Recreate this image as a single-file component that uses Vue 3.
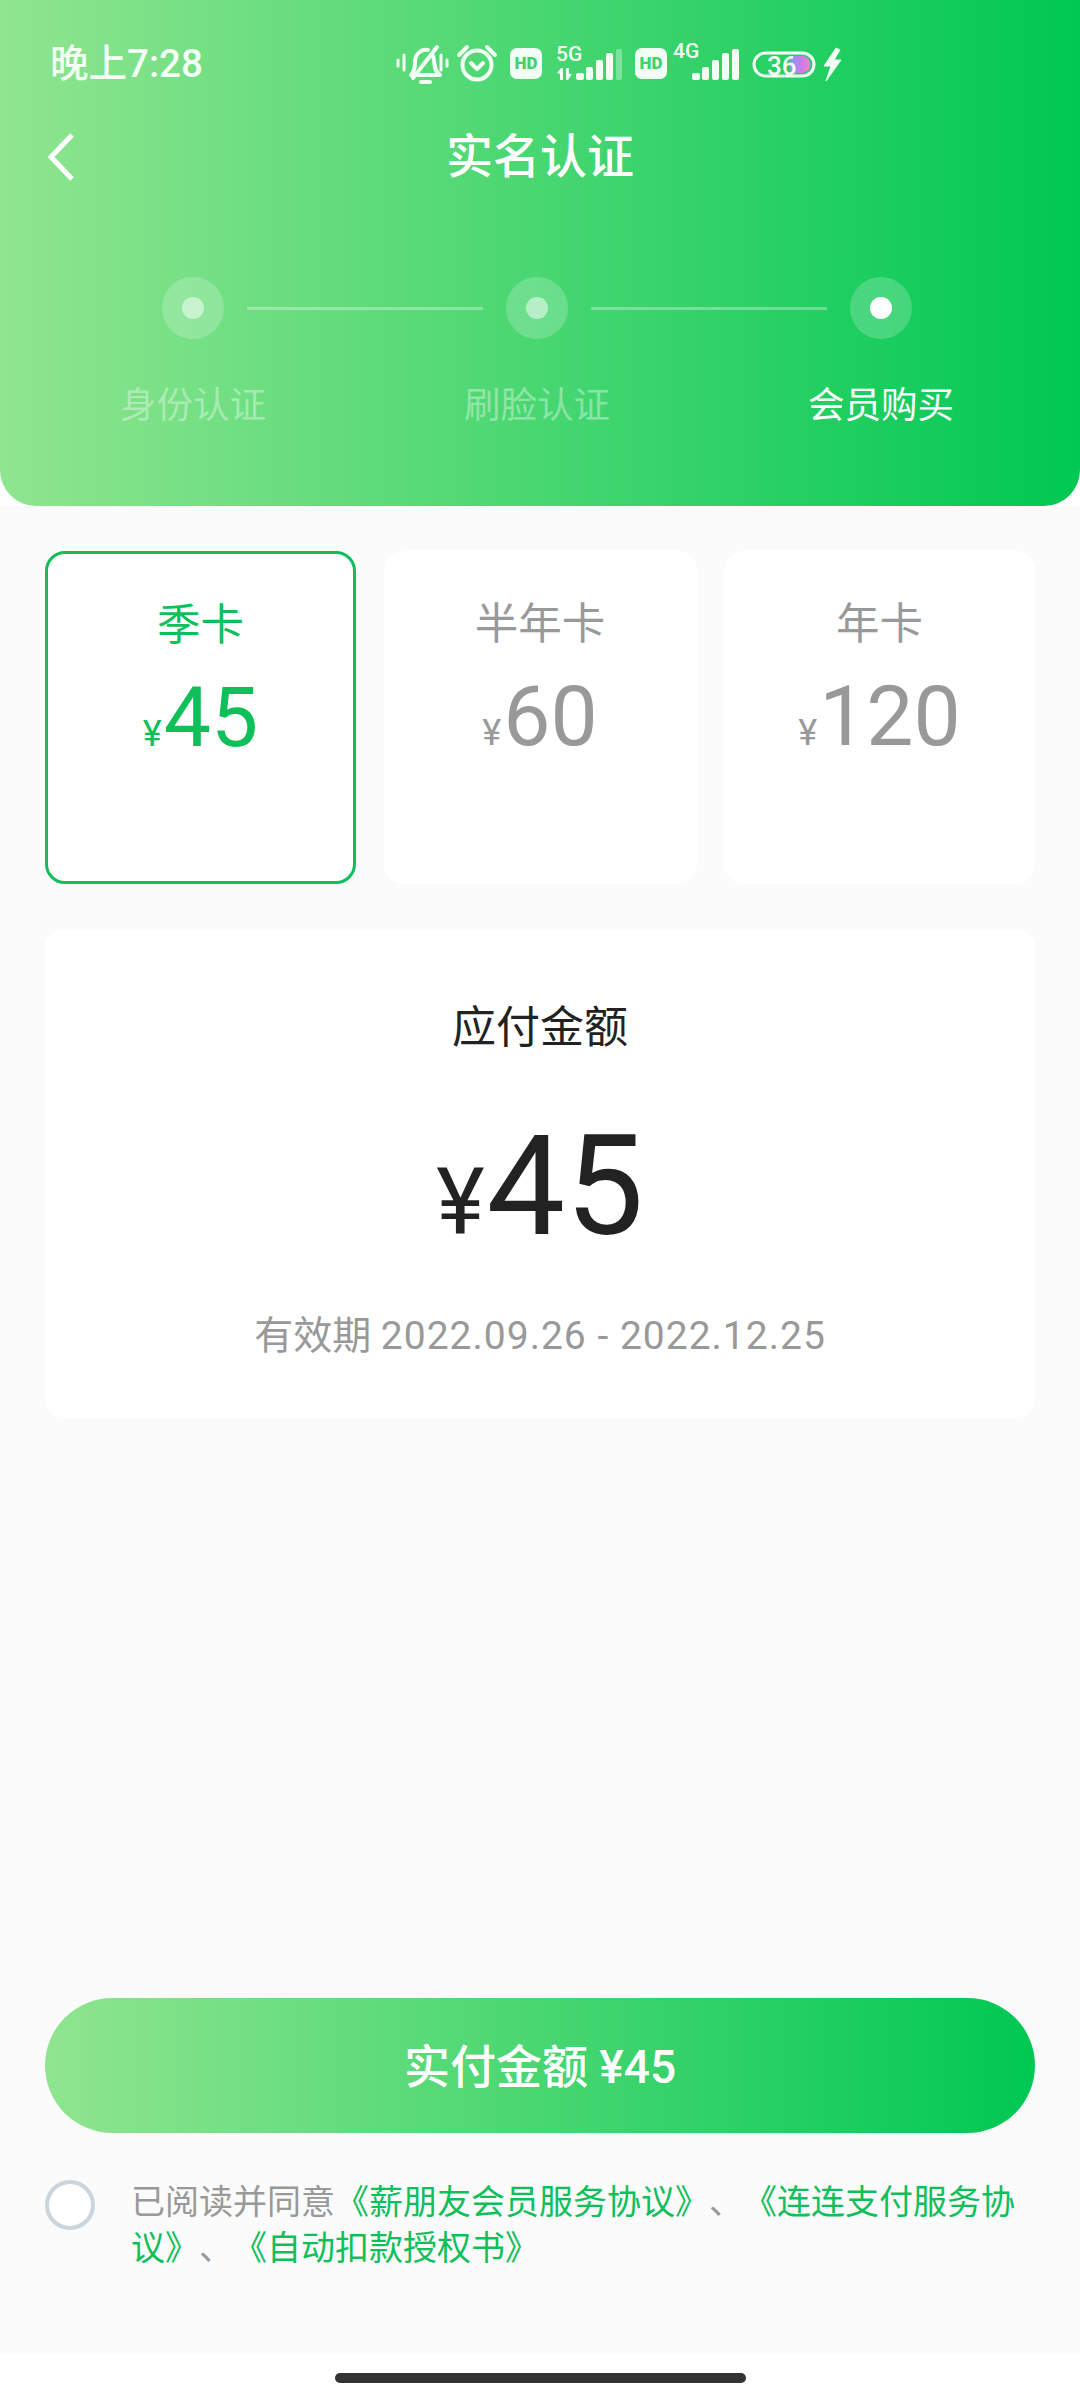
<template>
  <div class="page">
    <header class="head">
      <div class="status">
        <span class="time">晚上7:28</span>
        <svg class="status-icons" viewBox="395 40 450 46" width="450" height="46">
          <defs>
            <linearGradient id="batt" x1="0" x2="1" y1="0" y2="0">
              <stop offset="0" stop-color="#7f9cf5" />
              <stop offset="0.55" stop-color="#c77dea" />
              <stop offset="1" stop-color="#f07fd0" />
            </linearGradient>
          </defs>
          <g fill="none" stroke="#f2fff4" stroke-width="4" stroke-linecap="round" stroke-linejoin="round">
            <!-- muted bell -->
            <path d="M411 75 C415 71 415 66 415 62 C415 54 421 49 428 50 M433 56 C435 62 433 70 440 75 L418 75" />
            <path d="M413 78 L437 47" stroke-width="4" />
            <path d="M421 82 L430 82" />
            <path d="M398 60 L398 66 M404 55 L404 70 M441 55 L441 70 M447 60 L447 66" stroke-width="3" />
            <!-- alarm -->
            <circle cx="477" cy="65" r="14.5" stroke-width="4" />
            <path d="M471 63 L477 69 L483 63" />
            <path d="M459 55 L467 47 M495 55 L487 47" />
          </g>
          <rect x="510" y="48" width="32" height="31" rx="7" fill="#f2fff4" />
          <text x="526" y="69" class="hd">HD</text>
          <text x="556" y="61" class="net">5G</text>
          <g fill="#f2fff4">
            <path d="M557 73 L561 68 L563 68 L563 80 L560 80 L560 74 Z M566 68 L569 68 L569 74 L572 74 L568 80 L566 80 Z" />
            <rect x="576" y="73" width="8" height="7" rx="2" />
            <rect x="586" y="67" width="7" height="13" rx="2" />
            <rect x="596" y="60" width="7" height="20" rx="2" />
            <rect x="606" y="53" width="7" height="27" rx="2" />
            <rect x="616" y="49" width="6" height="31" rx="2" opacity=".35" />
          </g>
          <rect x="635" y="48" width="32" height="31" rx="7" fill="#f2fff4" />
          <text x="651" y="69" class="hd">HD</text>
          <text x="673" y="58" class="net">4G</text>
          <g fill="#f2fff4">
            <rect x="692" y="73" width="8" height="7" rx="2" />
            <rect x="702" y="67" width="7" height="13" rx="2" />
            <rect x="712" y="60" width="7" height="20" rx="2" />
            <rect x="722" y="53" width="7" height="27" rx="2" />
            <rect x="732" y="49" width="7" height="31" rx="2" />
          </g>
          <rect x="754" y="53" width="60" height="23" rx="11.5" fill="none" stroke="#f2fff4" stroke-width="3" />
          <path d="M790 56 L802 56 A8.5 8.5 0 0 1 802 73 L790 73 Z" fill="url(#batt)" />
          <text x="767" y="75" class="batt-num">36</text>
          <path d="M836 48 L824 66 L831 66 L826 81 L841 60 L834 60 L840 50 Z" fill="#f2fff4" stroke="#f2fff4" stroke-width="1" />
        </svg>
      </div>

      <div class="nav">
        <svg class="back" viewBox="0 0 30 50" width="30" height="50">
          <path d="M26 3 L5 25 L26 47" fill="none" stroke="#fff" stroke-width="5" />
        </svg>
        <span class="title">实名认证</span>
      </div>

      <div class="track">
        <template v-for="(step, index) in steps" :key="step.name">
          <span v-if="index > 0" class="track-line"></span>
          <span class="dot" :class="{ on: step.active }"><i></i></span>
        </template>
      </div>
      <div class="labels">
        <span v-for="step in steps" :key="step.name" :class="{ on: step.active }">{{ step.name }}</span>
      </div>
    </header>

    <main class="body">
      <div class="plans">
        <div v-for="plan in plans" :key="plan.name" class="plan" :class="{ selected: plan.selected }">
          <div class="plan-name">{{ plan.name }}</div>
          <div class="plan-price"><small>¥</small>{{ plan.price }}</div>
        </div>
      </div>

      <section class="due">
        <div class="due-label">应付金额</div>
        <div class="due-price"><small>¥</small>45</div>
        <div class="due-date">有效期 <span>2022.09.26 - 2022.12.25</span></div>
      </section>

      <div class="foot">
        <button type="button" class="pay">实付金额 ¥45</button>
        <div class="agree">
          <span class="radio"></span>
          <p>已阅读并同意<a>《薪朋友会员服务协议》</a>、<a>《连连支付服务协议》</a>、<a>《自动扣款授权书》</a></p>
        </div>
      </div>
    </main>

    <div class="home"><span></span></div>
  </div>
</template>

<script setup>
const steps = [
  { name: '身份认证', active: false },
  { name: '刷脸认证', active: false },
  { name: '会员购买', active: true }
]

const plans = [
  { name: '季卡', price: '45', selected: true },
  { name: '半年卡', price: '60', selected: false },
  { name: '年卡', price: '120', selected: false }
]
</script>

<style>
body {
  margin: 0;
  background: #fff;
}
</style>

<style scoped>
.page {
  width: 1080px;
  height: 2400px;
  display: flex;
  flex-direction: column;
  font-family: Roboto, "Noto Sans CJK SC", sans-serif;
  background: #fff;
  overflow: hidden;
}

.head {
  height: 506px;
  box-sizing: border-box;
  flex-shrink: 0;
  background: linear-gradient(90deg, #90e590, #00c853);
  border-radius: 0 0 36px 36px;
  color: #fff;
}

.status {
  height: 86px;
  display: flex;
  align-items: flex-start;
  padding-left: 50px;
}

.time {
  width: 345px;
  margin-top: 40px;
  font-size: 38.5px;
  font-weight: 500;
  line-height: 48px;
  color: #f4fff5;
}

.status-icons {
  margin-top: 40px;
}

.hd {
  font: 900 17px Roboto, sans-serif;
  fill: #3ed36e;
  text-anchor: middle;
}

.net {
  font: 500 21px Roboto, sans-serif;
  fill: #f2fff4;
}

.batt-num {
  font: 500 26px Roboto, sans-serif;
  fill: #f2fff4;
}

.nav {
  height: 70px;
  margin-top: 36px;
  position: relative;
  display: flex;
  align-items: center;
  justify-content: center;
}

.back {
  position: absolute;
  left: 46px;
  top: 10px;
}

.title {
  font-size: 47px;
  font-weight: 500;
  line-height: 70px;
}

.track {
  margin: 85px 168px 0 162px;
  display: flex;
  align-items: center;
}

.dot {
  width: 62px;
  height: 62px;
  border-radius: 50%;
  background: rgba(255, 255, 255, 0.2);
  display: flex;
  align-items: center;
  justify-content: center;
  flex-shrink: 0;
}

.dot i {
  width: 22px;
  height: 22px;
  border-radius: 50%;
  background: rgba(255, 255, 255, 0.5);
}

.dot.on i {
  background: #fff;
}

.track-line {
  flex: 1;
  height: 3px;
  margin: 0 23px;
  background: rgba(255, 255, 255, 0.32);
}

.labels {
  margin-top: 42px;
  padding: 0 21px;
  display: grid;
  grid-template-columns: repeat(3, 344px);
  text-align: center;
  font-size: 36.5px;
  line-height: 50px;
  color: rgba(255, 255, 255, 0.38);
}

.labels .on {
  color: #fff;
}

.body {
  flex: 1;
  background: #fbfbfb;
  padding: 45px 45px 0;
  display: flex;
  flex-direction: column;
}

.plans {
  display: grid;
  grid-template-columns: 311px 313px 311px;
  justify-content: space-between;
}

.plan {
  height: 333px;
  box-sizing: border-box;
  background: #fff;
  border-radius: 20px;
  padding-top: 48px;
  text-align: center;
  color: #999;
}

.plan.selected {
  border: 3px solid #12bd5c;
  padding-top: 46px;
  color: #0fbf5a;
}

.plan-name {
  font-size: 43.5px;
  line-height: 52px;
}

.plan-price {
  margin-top: 20px;
  font-size: 84px;
  line-height: 92px;
}

.plan-price small {
  font-size: 36px;
  margin-right: 2px;
}

.due {
  margin-top: 46px;
  height: 487px;
  box-sizing: border-box;
  background: #fff;
  border-radius: 16px;
  padding-top: 66px;
  text-align: center;
}

.due-label {
  font-size: 44px;
  line-height: 64px;
  color: #222;
}

.due-price {
  margin-top: 46px;
  font-size: 140px;
  line-height: 160px;
  color: #222;
}

.due-price small {
  font-size: 92px;
  margin-right: 2px;
}

.due-date {
  margin-top: 27px;
  font-size: 39px;
  line-height: 52px;
  color: #999;
}

.due-date span {
  letter-spacing: 1px;
}

.foot {
  margin-top: auto;
  padding-bottom: 83px;
}

.pay {
  display: block;
  width: 100%;
  height: 135px;
  padding: 0 0 5px;
  border: none;
  border-radius: 68px;
  background: linear-gradient(90deg, #90e590, #00c853);
  color: #fff;
  font-family: inherit;
  font-size: 46px;
  font-weight: 500;
}

.agree {
  margin-top: 46px;
  display: flex;
  align-items: flex-start;
}

.radio {
  width: 50px;
  height: 50px;
  margin-top: 1px;
  margin-right: 36px;
  box-sizing: border-box;
  border: 4px solid #ccd4dc;
  border-radius: 50%;
  background: #fff;
  flex-shrink: 0;
}

.agree p {
  margin: 0;
  font-size: 34px;
  line-height: 46px;
  color: #999;
  text-spacing-trim: space-all;
}

.agree a {
  color: #0fbf5a;
}

.home {
  height: 46px;
  box-sizing: border-box;
  flex-shrink: 0;
  background: #fff;
  display: flex;
  justify-content: center;
  padding-top: 19px;
}

.home span {
  width: 411px;
  height: 10px;
  border-radius: 5px;
  background: #333;
}
</style>
